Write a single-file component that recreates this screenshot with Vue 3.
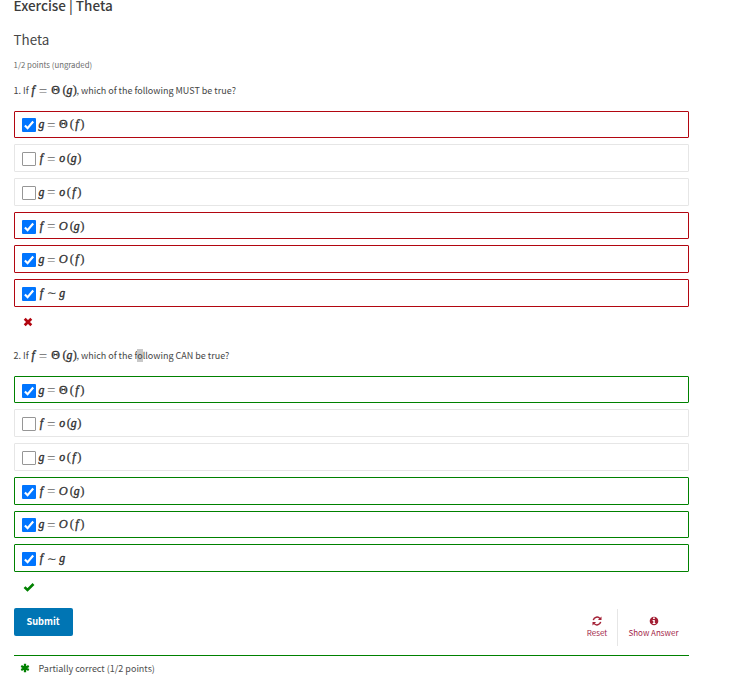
<script setup>
const options = [
  { id: 1, left: 'g', fn: 'Θ', arg: 'f', checked: true },
  { id: 2, left: 'f', fn: 'o', arg: 'g', checked: false },
  { id: 3, left: 'g', fn: 'o', arg: 'f', checked: false },
  { id: 4, left: 'f', fn: 'O', arg: 'g', checked: true },
  { id: 5, left: 'g', fn: 'O', arg: 'f', checked: true },
  { id: 6, left: 'f', fn: '', arg: 'g', checked: true },
]
const questions = [
  { id: 1, before: 'which of the following MUST be true?', mark: '', after: '', state: 'incorrect' },
  { id: 2, before: 'which of the f', mark: 'o', after: 'llowing CAN be true?', state: 'correct' },
]
</script>

<template>
  <main class="problem">
    <h2 class="unit-title">Exercise | Theta</h2>
    <h3 class="problem-title">Theta</h3>
    <div class="progress">1/2 points (ungraded)</div>

    <section v-for="q in questions" :key="q.id" class="question" :class="q.state">
      <p class="prompt">
        <span>{{ q.id }}. If</span>
        <span class="math inline-math"><i class="var f">f</i><span class="rel">=</span><span class="fn theta">Θ</span><span class="paren">(</span><i class="var g">g</i><span class="paren">)</span></span>
        <span class="ask">, {{ q.before }}<mark v-if="q.mark">{{ q.mark }}</mark>{{ q.after }}</span>
      </p>
      <ul class="choices">
        <li v-for="o in options" :key="o.id" class="choice" :class="{ checked: o.checked }">
          <span class="box">
            <svg v-if="o.checked" viewBox="0 0 13 13"><path d="M2.7 6.9 5.2 9.5 10.4 3.3" /></svg>
          </span>
          <span class="math">
            <i class="var" :class="o.left">{{ o.left }}</i>
            <template v-if="o.fn">
              <span class="rel">=</span>
              <span v-if="o.fn === 'Θ'" class="fn theta">Θ</span>
              <i v-else class="fn" :class="o.fn === 'O' ? 'big-o' : 'little-o'">{{ o.fn }}</i>
              <span class="paren">(</span><i class="var" :class="o.arg">{{ o.arg }}</i><span class="paren">)</span>
            </template>
            <template v-else><span class="rel sim">∼</span><i class="var g">g</i></template>
          </span>
        </li>
      </ul>
      <div class="status">
        <svg v-if="q.state === 'incorrect'" class="cross" viewBox="0 0 10 10"><path d="M1.7 1.7 8.3 8.3M8.3 1.7 1.7 8.3" /></svg>
        <svg v-else class="tick" viewBox="0 0 12 10"><path d="M1.5 5.1 4.5 8 10.5 2" /></svg>
      </div>
    </section>

    <div class="actions">
      <button class="submit">Submit</button>
      <div class="tools">
        <button class="tool reset">
          <svg viewBox="0 0 10 10"><path class="line" d="M1.3 4.1A3.8 3.8 0 0 1 8 2.6M8.7 5.9A3.8 3.8 0 0 1 2 7.4" /><path d="M9.5.5V4.1H5.9ZM.5 9.5V5.9H4.1Z" /></svg>
          <span>Reset</span>
        </button>
        <button class="tool answer">
          <svg viewBox="0 0 10 10"><circle cx="5" cy="5" r="4.3" /><path class="info" d="M4.1 1.6h1.7v1.3H4.1ZM3.6 3.9h2.2v3.2h.7v1H3.6v-1h.7V4.9h-.7Z" /></svg>
          <span>Show Answer</span>
        </button>
      </div>
    </div>

    <footer class="feedback">
      <svg viewBox="0 0 10 10"><path d="M5 .8V9.2M1.2 2.9 8.8 7.1M8.8 2.9 1.2 7.1" /></svg>
      <span>Partially correct (1/2 points)</span>
    </footer>
  </main>
</template>

<style>
body { background: #fff; overflow: hidden; }
</style>

<style scoped>
.problem {
  box-sizing: border-box;
  width: 689px;
  height: 687px;
  padding-left: 13.6px;
  color: #454545;
  font-family: "Noto Sans CJK SC", "Open Sans", sans-serif;
  font-size: 9px;
}
.unit-title { margin: 0; height: 30px; line-height: 11px; font-size: 13.5px; font-weight: 500; color: #3c3c3c; white-space: nowrap; }
.problem-title { margin: 0; height: 28px; line-height: 19px; font-size: 13.4px; font-weight: 400; color: #474747; }
.progress { height: 24px; line-height: 14px; font-size: 7.8px; color: #6b6b6b; }
.prompt { display: flex; align-items: center; margin: 0; height: 16px; white-space: pre; }
.question { height: 265.2px; }
.choices { list-style: none; margin: 0; padding: 12.6px 0 0; display: flex; flex-direction: column; gap: 6px; }
.choice { box-sizing: border-box; display: flex; align-items: center; height: 27.7px; padding-left: 7.4px; border: 1px solid #e6e6e6; border-radius: 1px; }
.incorrect .checked { border-color: #b20610; }
.correct .checked { border-color: #008100; }
.box { box-sizing: border-box; width: 14px; height: 14px; margin: 2px 2px 0 0; border: 1px solid #969696; border-radius: 1px; background: #fff; }
.checked .box { border: 0; background: #0075ff; }
.box svg { display: block; width: 14px; height: 14px; }
.box path { fill: none; stroke: #fff; stroke-width: 2; }
.math { display: flex; align-items: center; height: 14px; font: 400 11.8px/14px "Liberation Serif", serif; color: #333; }
.var { display: block; width: 6.8px; text-align: center; -webkit-text-stroke: .4px #333; }
.rel { width: 9px; margin: 1px 3px 0 2px; font-size: 15px; color: #666; text-align: center; }
.sim { font-family: "DejaVu Sans", sans-serif; font-size: 12px; margin-top: 1px; color: #444; }
.theta { width: 9px; font-size: 12px; margin-right: 2px; -webkit-text-stroke: .3px #333; }
.big-o { width: 9px; margin-right: 2px; font-size: 12.5px; -webkit-text-stroke: .3px #333; }
.little-o { width: 7px; margin-right: 1px; -webkit-text-stroke: .4px #333; }
.fn { text-align: center; }
.paren { width: 3.6px; font-size: 12.5px; text-align: center; -webkit-text-stroke: .2px #333; }
.inline-math { margin-left: 1px; }
.inline-math .theta { width: 10px; }
mark { background: #c8c8c8; color: inherit; }
.status { display: flex; height: 14px; margin-top: 8px; padding-left: 9px; align-items: center; }
.cross { width: 10px; height: 10px; }
.cross path { fill: none; stroke: #b20610; stroke-width: 2.7; }
.tick { width: 12px; height: 10px; }
.tick path { fill: none; stroke: #008100; stroke-width: 2.6; }
.actions { display: flex; justify-content: space-between; height: 47px; margin-top: -4.4px; }
button { border: 0; margin: 0; padding: 0; font-family: inherit; }
.submit { width: 59px; height: 28px; padding-bottom: 2px; border-radius: 2px; background: #0075b4; color: #fff; font-size: 9.3px; font-weight: 700; }
.tools { display: flex; height: 37px; margin-top: 1px; }
.tool { display: flex; flex-direction: column; align-items: center; background: none; color: #a31f4a; font-size: 8px; line-height: 12px; padding-top: 7px; white-space: nowrap; }
.tool svg { width: 10px; height: 10px; margin-bottom: 1px; fill: #a31f34; }
.line { fill: none; stroke: #a31f34; stroke-width: 1.5; }
.info { fill: #fff; }
.reset { width: 41px; border-right: 1px solid #e6e6e6; }
.answer { width: 71px; }
.feedback { display: flex; align-items: center; height: 25px; border-top: 1px solid #008100; padding-left: 6px; color: #4d4d4d; }
.feedback svg { width: 10px; height: 10px; margin-right: 9px; }
.feedback path { fill: none; stroke: #008100; stroke-width: 2.3; }
</style>
